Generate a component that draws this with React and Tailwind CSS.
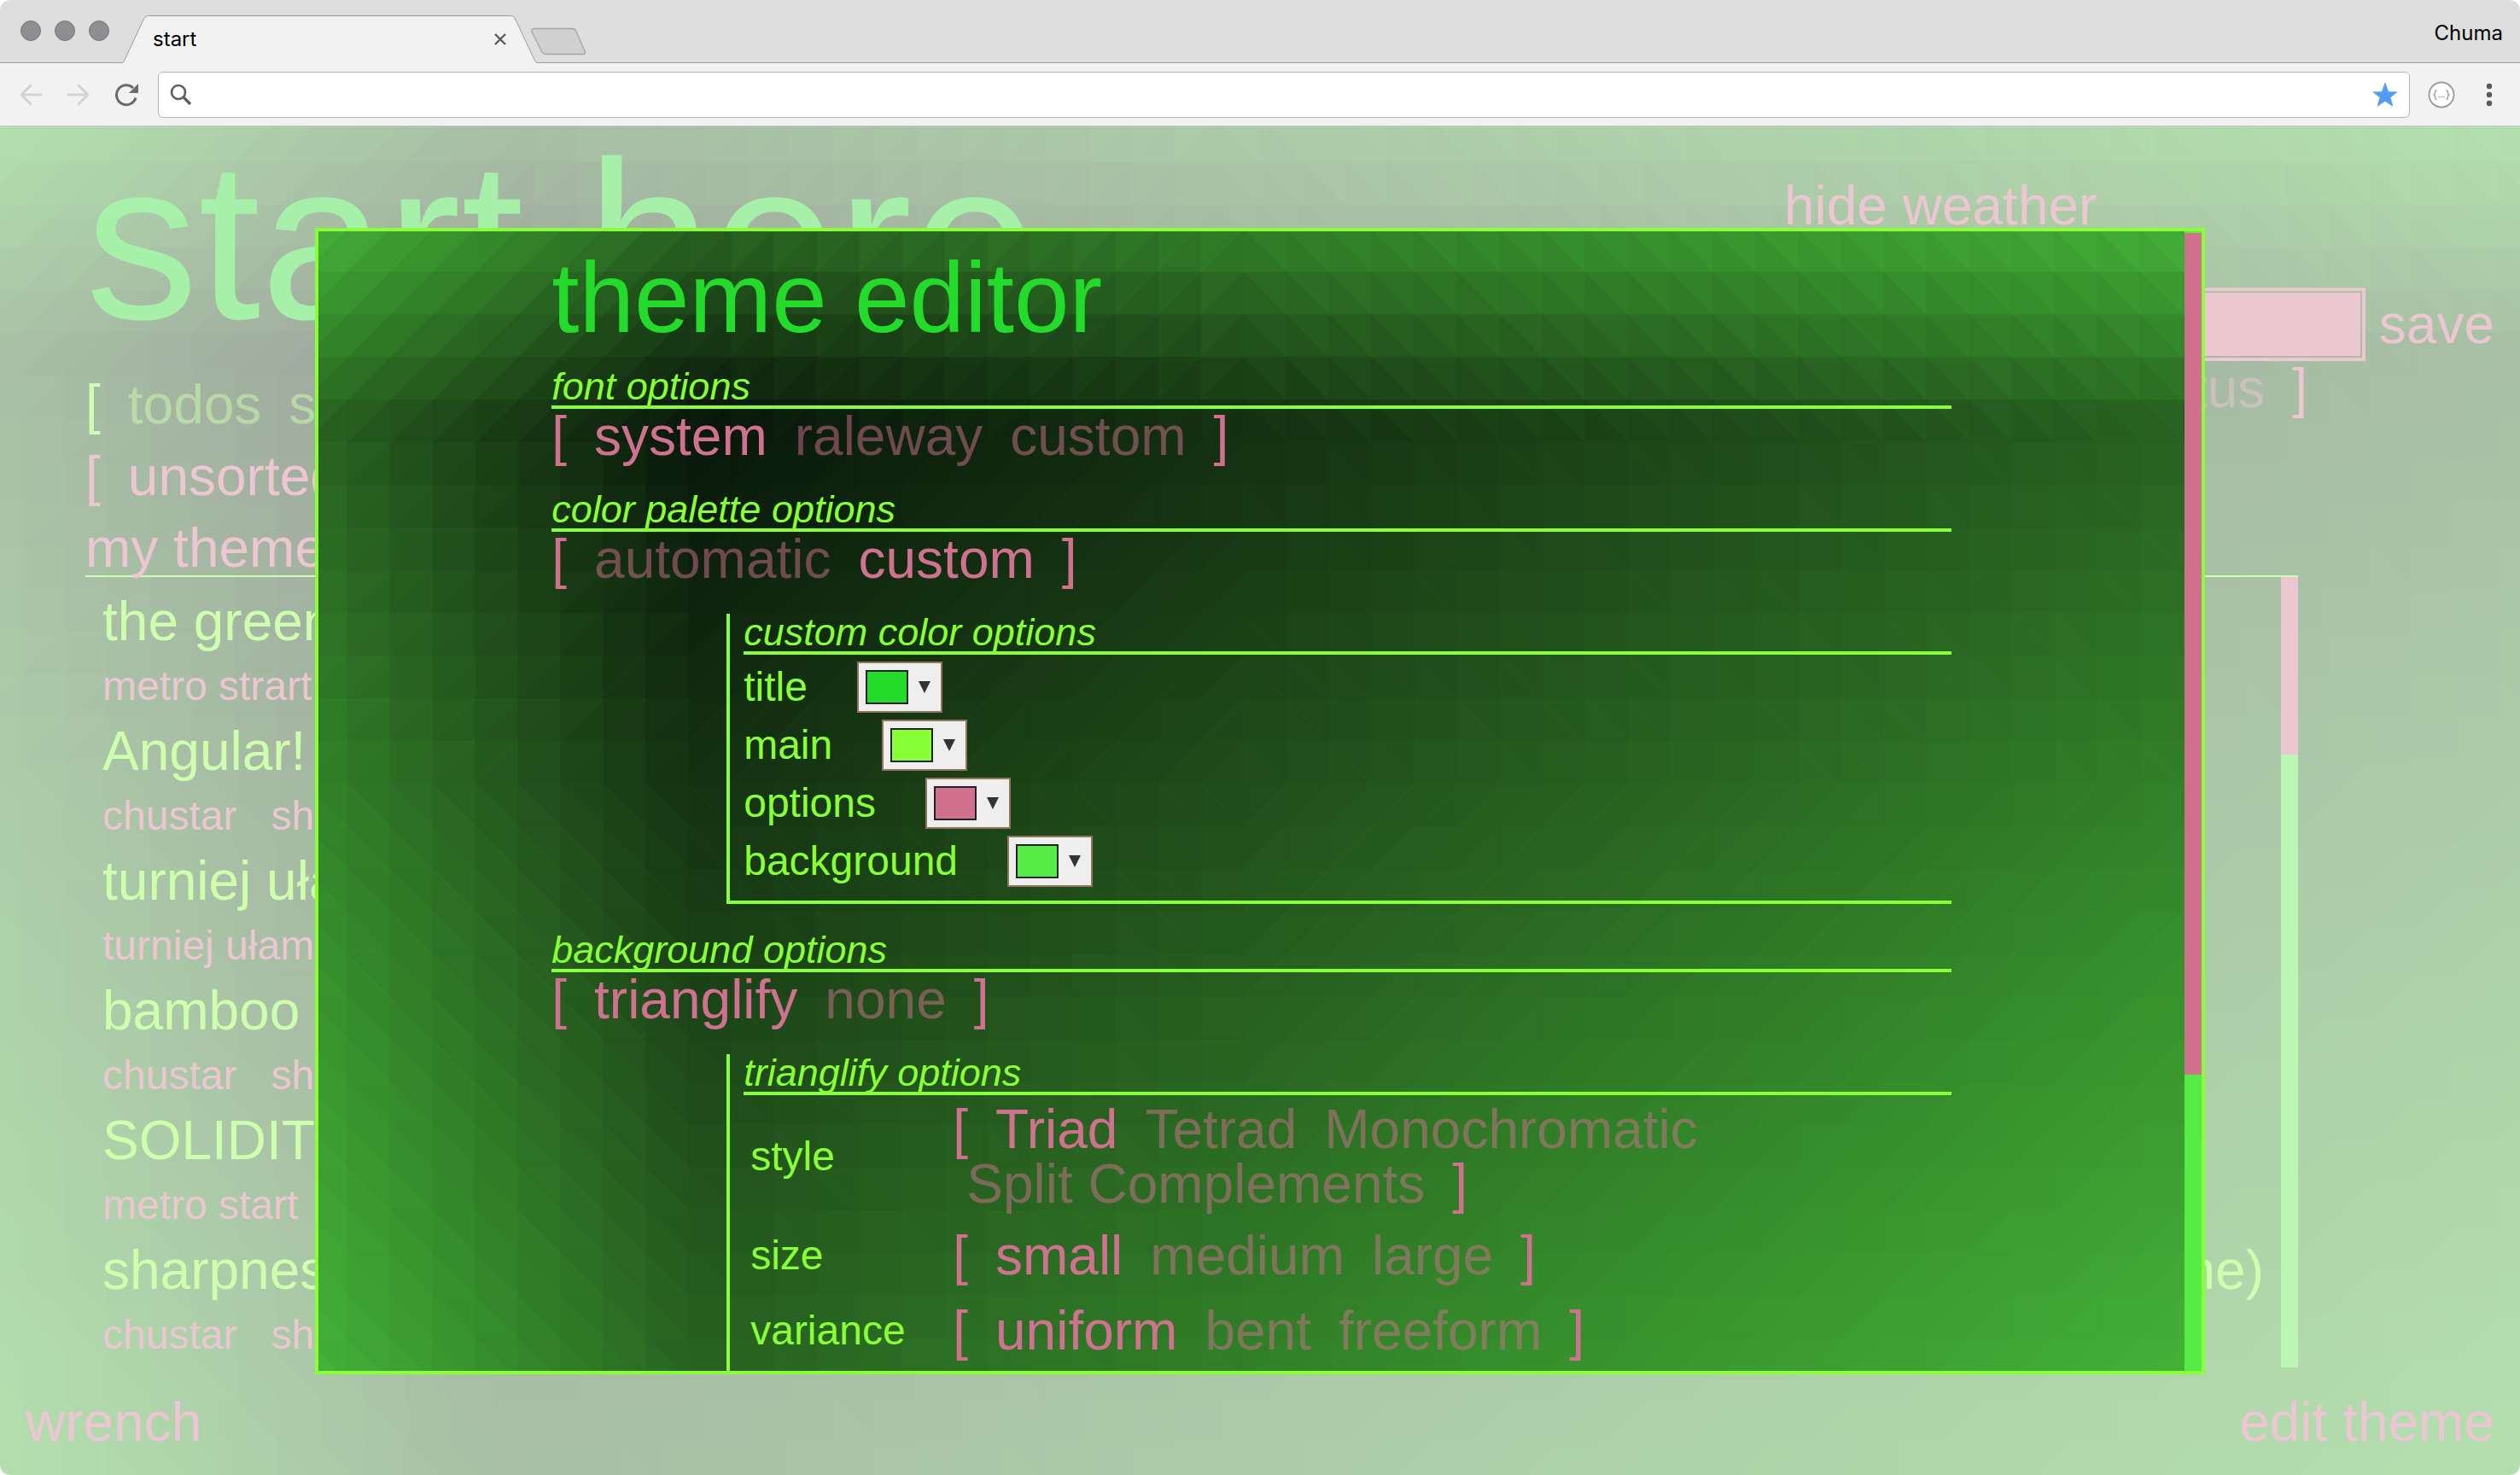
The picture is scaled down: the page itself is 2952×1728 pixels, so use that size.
import React from "react";

const RAMP = [
  [8, 22, 10],
  [24, 58, 20],
  [40, 98, 33],
  [53, 140, 43],
  [68, 177, 56],
];

function rampColor(t) {
  const p = Math.min(Math.max(t, 0), 1) * (RAMP.length - 1);
  const i = Math.min(Math.floor(p), RAMP.length - 2);
  const c = RAMP[i].map((v, k) => Math.round(v + (RAMP[i + 1][k] - v) * (p - i)));
  return `rgb(${c.join(",")})`;
}

function falloff(u, dark) {
  return u < dark ? 1 - u / dark : (u - dark) / (1 - dark);
}

function Triangles({ width, height, offsetX = 0, offsetY = 0 }) {
  const cell = 50;
  const shapes = [];
  for (let y = -offsetY; y < height; y += cell) {
    for (let x = -offsetX; x < width; x += cell) {
      const left = x < width * 0.47;
      const top = y < height * 0.45;
      const rising = left === top;
      const x2 = x + cell;
      const y2 = y + cell;
      const tris = rising
        ? [[x, y, x2, y, x, y2], [x2, y, x2, y2, x, y2]]
        : [[x, y, x2, y, x2, y2], [x, y, x2, y2, x, y2]];
      tris.forEach((p, i) => {
        const cx = (p[0] + p[2] + p[4]) / 3 / width;
        const cy = (p[1] + p[3] + p[5]) / 3 / height;
        const color = rampColor((falloff(cx, 0.2) + falloff(cy, 0.17)) / 2);
        shapes.push(
          <polygon key={`${x}-${y}-${i}`} points={p.join(" ")} fill={color} stroke={color} strokeWidth="1" />
        );
      });
    }
  }
  return (
    <svg
      className="absolute inset-0 h-full w-full"
      viewBox={`0 0 ${width} ${height}`}
      preserveAspectRatio="none"
      aria-hidden="true"
    >
      {shapes}
    </svg>
  );
}

function Options({ items, active, label }) {
  return (
    <div role="group" aria-label={label} className="text-[64px] leading-[64px] text-[#d0728f]">
      <span className="mr-4">[</span>
      {items.map((item) => (
        <button
          key={item}
          type="button"
          aria-pressed={item === active}
          className={item === active ? "px-4" : "px-4 opacity-50"}
        >
          {item}
        </button>
      ))}
      <span className="ml-4">]</span>
    </div>
  );
}

function Heading({ children }) {
  return (
    <h2 className="border-b-4 border-[#88ff36] text-[45px] leading-[44px] italic text-[#88ff36]">{children}</h2>
  );
}

const COLORS = [
  ["title", "bg-[#24db2b]"],
  ["main", "bg-[#88ff36]"],
  ["options", "bg-[#d0728f]"],
  ["background", "bg-[#57eb48]"],
];

function ColorRow({ name, swatch }) {
  return (
    <div className="flex items-center gap-[58px] text-[48px] leading-[60px]">
      <label htmlFor={`color-${name}`}>{name}</label>
      <button
        id={`color-${name}`}
        type="button"
        className="flex h-[60px] w-[100px] items-center gap-3 border-2 border-[#92755c] bg-[#eeeeee] pl-2"
      >
        <span className={`h-10 w-[50px] border-2 border-[#222222] ${swatch}`} />
        <svg width="14" height="14" viewBox="0 0 14 14" aria-hidden="true">
          <path d="M0 0H14L7 14Z" fill="#333333" />
        </svg>
      </button>
    </div>
  );
}

const TRIANGLIFY = [
  ["style", ["Triad", "Tetrad", "Monochromatic", "Split Complements"], "Triad"],
  ["size", ["small", "medium", "large"], "small"],
  ["variance", ["uniform", "bent", "freeform"], "uniform"],
];

function ThemeEditor() {
  return (
    <section
      role="dialog"
      aria-label="theme editor"
      className="relative flex h-[85%] w-3/4 overflow-hidden border-4 border-[#88ff36]"
    >
      <Triangles width={2206} height={1336} offsetX={16} offsetY={2} />
      <div className="relative flex-1 overflow-hidden">
        <div className="mx-auto flex w-3/4 flex-col gap-8 pt-5 text-[#88ff36]">
          <div>
            <h1 className="mb-6 text-[116px] leading-[116px] text-[#24db2b]">theme editor</h1>
            <Heading>font options</Heading>
            <Options label="font" items={["system", "raleway", "custom"]} active="system" />
          </div>
          <div>
            <Heading>color palette options</Heading>
            <Options label="color palette" items={["automatic", "custom"]} active="custom" />
          </div>
          <div className="ml-[12.5%] border-b-4 border-l-4 border-[#88ff36] pl-4">
            <Heading>custom color options</Heading>
            <div className="flex flex-col gap-2 pt-2 pb-4">
              {COLORS.map(([name, swatch]) => (
                <ColorRow key={name} name={name} swatch={swatch} />
              ))}
            </div>
          </div>
          <div>
            <Heading>background options</Heading>
            <Options label="background" items={["trianglify", "none"]} active="trianglify" />
          </div>
          <div className="ml-[12.5%] border-b-4 border-l-4 border-[#88ff36] pb-20 pl-4">
            <Heading>trianglify options</Heading>
            <table className="w-full">
              <tbody>
                {TRIANGLIFY.map(([name, items, active]) => (
                  <tr key={name} className="h-[88px]">
                    <th scope="row" className="w-[245px] pl-2 text-left text-[48px] leading-[60px] font-normal">
                      {name}
                    </th>
                    <td className="py-2">
                      <Options label={name} items={items} active={active} />
                    </td>
                  </tr>
                ))}
              </tbody>
            </table>
          </div>
        </div>
      </div>
      <div className="relative w-5 bg-[#57eb48] pt-0.5">
        <div className="h-[74%] bg-[#d0728f]" />
      </div>
    </section>
  );
}

const BOOKMARKS = [
  ["the green", null, ["metro strart"]],
  ["Angular!", null, ["chustar", "share"]],
  ["turniej ułamków", null, ["turniej ułamków"]],
  ["bamboo", null, ["chustar", "share"]],
  ["SOLIDITY", null, ["metro start"]],
  ["sharpness", "(chrome)", ["chustar", "share"]],
];

function StartPage() {
  return (
    <div className="absolute inset-0 flex flex-col overflow-hidden text-[64px] leading-[64px] text-[#d0728f] opacity-40">
      <Triangles width={2952} height={1580} offsetX={24} offsetY={8} />
      <header className="relative flex justify-between pr-[30px] pl-[100px]">
        <div className="pt-0.5">
          <h1 className="mb-7 text-[264px] leading-[264px] whitespace-nowrap text-[#24db2b]">start here</h1>
          <div className="text-[#88ff36]">
            <span className="mr-4">[</span>
            <button type="button" className="px-4 opacity-50">todos</button>
            <button type="button" className="px-4 opacity-50">sites</button>
          </div>
        </div>
        <div className="flex w-[44%] flex-col items-center pt-[61px]">
          <button type="button" className="mr-14">hide weather</button>
          <div className="mt-16 flex w-full items-center gap-4">
            <input
              aria-label="name"
              className="h-[86px] min-w-0 flex-1 border-4 border-[#d0728f] bg-[#d0728f] bg-clip-content p-0.5"
            />
            <button type="button">save</button>
          </div>
          <div className="mr-6 flex w-2/3 justify-between">
            <span>[</span>
            <span>
              <button type="button" className="px-4 opacity-50">status</button>
              <span className="ml-4">]</span>
            </span>
          </div>
        </div>
      </header>
      <main className="relative mr-[260px] ml-[100px] flex min-h-0 flex-1 flex-col gap-5 pt-5">
        <div>
          <span className="mr-4">[</span>
          <button type="button" className="px-4">unsorted</button>
        </div>
        <div className="flex min-h-0 flex-1 flex-col">
          <h2 className="border-b-2 border-[#88ff36]">my themes</h2>
          <div className="flex min-h-0 flex-1 overflow-hidden">
            <ul className="flex-1 overflow-hidden px-5 pt-3">
              {BOOKMARKS.map(([title, note, tags], i) => (
                <li key={i}>
                  <div className="flex justify-between leading-[80px] text-[#88ff36]">
                    <a href="#open">{title}</a>
                    {note && <span>{note}</span>}
                  </div>
                  <div className="flex gap-10 text-[48px] leading-[72px]">
                    {tags.map((tag) => (
                      <a key={tag} href="#tag">{tag}</a>
                    ))}
                  </div>
                </li>
              ))}
            </ul>
            <div className="w-5 bg-[#57eb48]">
              <div className="h-[208px] bg-[#d0728f]" />
            </div>
          </div>
        </div>
      </main>
      <footer className="relative flex justify-between px-[30px] pt-6 pb-[22px] leading-[80px]">
        <button type="button">wrench</button>
        <button type="button">edit theme</button>
      </footer>
    </div>
  );
}

function BrowserChrome() {
  return (
    <div className="shrink-0 font-['Inter',sans-serif] text-2xl text-black">
      <div className="flex h-[74px] border-b border-[#9b9b9b] bg-[#dedede]">
        <div className="flex items-center gap-4 pl-6 pb-0.5">
          <span className="size-6 rounded-full border border-[#76757a] bg-[#8e8d92]" />
          <span className="size-6 rounded-full border border-[#76757a] bg-[#8e8d92]" />
          <span className="size-6 rounded-full border border-[#76757a] bg-[#8e8d92]" />
        </div>
        <div className="relative mt-[18px] -mb-px ml-[15px] flex w-[486px] items-center justify-between pr-9 pl-9">
          <svg className="absolute inset-0 h-full w-full" viewBox="0 0 486 56" preserveAspectRatio="none" aria-hidden="true">
            <path d="M0 56 Q2 55 3 52 L26 3 Q27 .5 31 .5 L455 .5 Q459 .5 460 3 L483 52 Q484 55 486 56Z" fill="#f2f2f2" />
            <path d="M0 55.5 Q2 55 3 52 L26 3 Q27 .5 31 .5 L455 .5 Q459 .5 460 3 L483 52 Q484 55 486 55.5" fill="none" stroke="#9b9b9b" />
          </svg>
          <span className="relative">start</span>
          <button type="button" aria-label="Close tab" className="relative">
            <svg width="14" height="14" viewBox="0 0 14 14">
              <path d="M1 1L13 13M13 1L1 13" stroke="#5a5a5a" strokeWidth="2.4" />
            </svg>
          </button>
        </div>
        <button type="button" aria-label="New tab" className="-ml-2 self-start pt-8">
          <svg width="66" height="33" viewBox="0 0 68 33" preserveAspectRatio="none">
            <path d="M5 1.5H50Q54 1.5 55.500 4.500L66 28Q67.500 31.500 64 31.500H20Q15.500 31.500 14 28.500L2 5Q1 1.500 5 1.500Z" fill="#d0d0d0" stroke="#a6a6a6" strokeWidth="1.4" />
          </svg>
        </button>
        <span className="ml-auto self-center pt-1 pr-5">Chuma</span>
      </div>
      <div className="flex h-[74px] items-center border-b border-[#cbcbcb] bg-[#f2f2f2] pl-[22px]">
        <button type="button" aria-label="Back" className="mr-7">
          <svg width="28" height="28" viewBox="0 0 28 28" fill="none" stroke="#d3d3d3" strokeWidth="3" strokeLinecap="round" strokeLinejoin="round">
            <path d="M26 14H3M14 3L3 14L14 25" />
          </svg>
        </button>
        <button type="button" aria-label="Forward" className="mr-7">
          <svg width="28" height="28" viewBox="0 0 28 28" fill="none" stroke="#d3d3d3" strokeWidth="3" strokeLinecap="round" strokeLinejoin="round">
            <path d="M2 14H25M14 3L25 14L14 25" />
          </svg>
        </button>
        <button type="button" aria-label="Reload" className="mr-[23px]">
          <svg width="28" height="28" viewBox="0 0 28 28">
            <path d="M25 17.500A11.500 11.500 0 1 1 22 6" fill="none" stroke="#6b6b6b" strokeWidth="3" />
            <path d="M28 1V12H17Z" fill="#6b6b6b" />
          </svg>
        </button>
        <div className="flex h-[54px] flex-1 items-center rounded-md border border-[#b4b4b4] bg-white pr-3 pl-[13px]">
          <svg width="26" height="26" viewBox="0 0 26 26" fill="none" stroke="#606060" aria-hidden="true">
            <circle cx="10" cy="10" r="8" strokeWidth="2.600" />
            <path d="M15.500 15.500L24 24" strokeWidth="3.400" />
          </svg>
          <input aria-label="Address" className="h-full min-w-0 flex-1 px-4 outline-none" />
          <button type="button" aria-label="Bookmark">
            <svg width="32" height="32" viewBox="0 0 32 32">
              <path d="M16 1L19.900 12.200L31 12.500L22.400 19.200L25.500 30L16 23.800L6.500 30L9.600 19.200L1 12.500L12.100 12.200Z" fill="#529cf5" />
            </svg>
          </button>
        </div>
        <button type="button" aria-label="Extension" className="ml-[21px]">
          <svg width="32" height="32" viewBox="0 0 32 32" fill="none" stroke="#9a9a9a">
            <circle cx="16" cy="16" r="14.500" fill="#ffffff" strokeWidth="1.800" />
            <path d="M10.500 11Q8.500 11 8.500 13Q8.500 16 6.500 16.200Q8.500 16.400 8.500 19Q8.500 21.500 10.500 21.500M21.500 11Q23.500 11 23.500 13Q23.500 16 25.500 16.200Q23.500 16.400 23.500 19Q23.500 21.500 21.500 21.500" strokeWidth="1.300" />
            <path d="M12.500 18.500h1.500M15.300 18.500h1.500M18 18.500h1.500" strokeWidth="1.500" />
          </svg>
        </button>
        <button type="button" aria-label="Menu" className="mr-8 ml-9">
          <svg width="8" height="28" viewBox="0 0 8 28" fill="#5a5a5a">
            <circle cx="4" cy="4" r="3.200" />
            <circle cx="4" cy="14" r="3.200" />
            <circle cx="4" cy="24" r="3.200" />
          </svg>
        </button>
      </div>
    </div>
  );
}

export default function App() {
  return (
    <div className="flex h-screen flex-col overflow-hidden rounded-[12px] bg-white font-['Liberation_Sans',Arial,sans-serif]">
      <BrowserChrome />
      <div className="relative min-h-0 flex-1">
        <StartPage />
        <div className="absolute inset-0 flex items-center justify-center">
          <ThemeEditor />
        </div>
      </div>
    </div>
  );
}
